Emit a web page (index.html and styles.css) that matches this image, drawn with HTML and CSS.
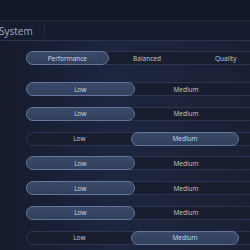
FILE: index.html
```html
<!DOCTYPE html>
<html lang="en">
  <head>
    <meta charset="UTF-8" />
    <title>System</title>
    <link rel="stylesheet" href="styles.css">
  </head>
  <body>
    <div class="topbar"></div>
    <header class="header">
      <span class="title">System</span>
      <span class="divider"></span>
    </header>

    <main class="settings">
      <div class="seg seg-wide">
        <span class="opt active">Performance</span>
        <span class="opt">Balanced</span>
        <span class="opt">Quality</span>
      </div>

      <div class="rows">
        <div class="seg">
          <span class="opt active">Low</span>
          <span class="opt">Medium</span>
          <span class="opt"></span>
        </div>
        <div class="seg">
          <span class="opt active">Low</span>
          <span class="opt">Medium</span>
          <span class="opt"></span>
        </div>
        <div class="seg">
          <span class="opt">Low</span>
          <span class="opt active">Medium</span>
          <span class="opt"></span>
        </div>
        <div class="seg">
          <span class="opt active">Low</span>
          <span class="opt">Medium</span>
          <span class="opt"></span>
        </div>
        <div class="seg">
          <span class="opt active">Low</span>
          <span class="opt">Medium</span>
          <span class="opt"></span>
        </div>
        <div class="seg">
          <span class="opt active">Low</span>
          <span class="opt">Medium</span>
          <span class="opt"></span>
        </div>
        <div class="seg">
          <span class="opt">Low</span>
          <span class="opt active">Medium</span>
          <span class="opt"></span>
        </div>
      </div>
    </main>
  </body>
</html>
```

FILE: styles.css
```css
* {
  margin: 0;
  padding: 0;
  box-sizing: border-box;
}

html,
body {
  width: 250px;
  height: 250px;
  overflow: hidden;
}

body {
  font-family: 'Open Sans', sans-serif;
  color: #c9d0dc;
  background: linear-gradient(to right, #161c2c 0%, #1d2540 45%, #1c2339 75%, #1a2034 100%);
}

.topbar {
  height: 20px;
  background: #121725;
}

/* Header */
.header {
  height: 21px;
  display: flex;
  align-items: center;
  background: #161d31;
  border-top: 1px solid #1f2740;
  border-bottom: 1px solid #2a3350;
}

.title {
  font-size: 10px;
  color: #a4acbd;
  margin-left: -1px;
  width: 45px;
}

.divider {
  width: 1px;
  height: 14px;
  background: #262e45;
}

/* Settings */
.settings {
  padding: 10px 0 0 26px;
}

.seg {
  display: flex;
  width: 318px;
  height: 14px;
  border-radius: 7px;
  background: #181e30;
  border: 1px solid #2b3450;
}

.seg-wide {
  width: 240px;
}

.opt {
  flex: 1;
  display: flex;
  align-items: center;
  justify-content: center;
  font-size: 6.5px;
  color: #c3cad8;
  border-radius: 7px;
  margin: -1px;
}

.opt.active {
  background: linear-gradient(to bottom, #3a4968, #30405c);
  border: 1px solid #66769a;
  color: #d6dbe6;
}

.rows {
  display: flex;
  flex-direction: column;
  gap: 10.8px;
  margin-top: 17px;
}
```
